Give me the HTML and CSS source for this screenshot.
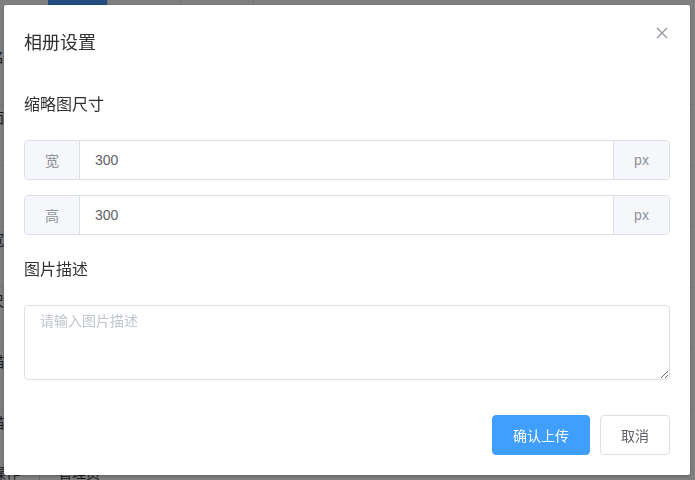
FILE: index.html
```html
<!DOCTYPE html>
<html lang="zh-CN">

<head>
    <meta charset="UTF-8">
    <meta name="viewport" content="width=device-width, initial-scale=1.0">
    <title>相册设置</title>
    <link rel="stylesheet" href="styles.css">
</head>

<body>
    <!-- page behind the dialog -->
    <div class="page">
        <div class="tabs">
            <span class="tab active"></span>
            <span class="tab"></span>
            <span class="tab"></span>
        </div>
        <div class="rows">
            <div class="row">名称</div>
            <div class="row">面</div>
            <div class="row"></div>
            <div class="row">宽</div>
            <div class="row">尺寸</div>
            <div class="row">描述</div>
            <div class="row">描述</div>
        </div>
        <div class="foot-row">
            <span class="cell">操作人</span>
            <span class="cell">管理员</span>
        </div>
    </div>

    <div class="mask">
        <div class="dialog">
            <div class="dialog-header">
                <span class="dialog-title">相册设置</span>
                <button class="dialog-close" aria-label="关闭">
                    <svg width="12" height="12" viewBox="0 0 12 12">
                        <path d="M1 1 L11 11 M11 1 L1 11" stroke="#909399" stroke-width="1.2" fill="none"/>
                    </svg>
                </button>
            </div>

            <div class="dialog-body">
                <div class="section-title">缩略图尺寸</div>

                <div class="input-group">
                    <div class="addon">宽</div>
                    <input type="text" class="inner" value="300">
                    <div class="addon append">px</div>
                </div>

                <div class="input-group second">
                    <div class="addon">高</div>
                    <input type="text" class="inner" value="300">
                    <div class="addon append">px</div>
                </div>

                <div class="section-title lower">图片描述</div>

                <textarea class="textarea" placeholder="请输入图片描述"></textarea>
            </div>

            <div class="dialog-footer">
                <button class="btn primary">确认上传</button>
                <button class="btn">取消</button>
            </div>
        </div>
    </div>
</body>

</html>
```

FILE: styles.css
```css
* {
    box-sizing: border-box;
}

body {
    margin: 0;
    width: 695px;
    height: 480px;
    overflow: hidden;
    font-family: "Liberation Sans", "Noto Sans CJK SC", sans-serif;
    background: #fff;
    color: #303133;
}

/* page behind the mask */
.page {
    height: 480px;
    position: relative;
}

.tabs {
    display: flex;
    height: 40px;
    padding-left: 48px;
}

.tab {
    width: 73px;
    border-right: 1px solid #e4e4e4;
}

.tab.active {
    width: 60px;
    background: #3e9cff;
    border-right: 1px solid #e4e4e4;
}

.rows {
    margin-top: 4px;
}

.row {
    height: 61px;
    padding-top: 2px;
    margin-left: -10px;
    font-size: 14px;
    color: #333;
    border-bottom: 1px solid #eee;
}

.foot-row {
    display: flex;
    font-size: 14px;
    color: #333;
    margin-top: -9px;
}

.foot-row .cell {
    width: 48px;
    margin-left: -8px;
    border-right: 1px solid #ddd;
    padding-right: 6px;
}

.foot-row .cell + .cell {
    margin-left: 0;
    padding-left: 18px;
    width: auto;
    border-right: none;
}

.mask {
    position: fixed;
    inset: 0;
    background: rgba(0, 0, 0, 0.5);
    padding: 5px 5px 5px 4px;
}

/* dialog */
.dialog {
    width: 686px;
    height: 470px;
    background: #fff;
    border-radius: 2px;
    box-shadow: 0 1px 3px rgba(0, 0, 0, 0.3);
    padding: 0 20px 20px;
    position: relative;
}

.dialog-header {
    padding-top: 26px;
    height: 50px;
}

.dialog-title {
    display: block;
    font-size: 18px;
    line-height: 24px;
    color: #303133;
}

.dialog-close {
    position: absolute;
    top: 22px;
    right: 22px;
    width: 12px;
    height: 12px;
    padding: 0;
    border: none;
    background: none;
    cursor: pointer;
}

.dialog-close svg {
    display: block;
}

.section-title {
    font-size: 16px;
    line-height: 24px;
    color: #303133;
    margin-top: 38px;
}

.section-title.lower {
    margin-top: 23px;
}

.input-group {
    display: flex;
    height: 40px;
    margin-top: 23px;
    border: 1px solid #dcdfe6;
    border-radius: 4px;
    overflow: hidden;
}

.input-group.second {
    margin-top: 15px;
}

.addon {
    width: 55px;
    flex: none;
    background: #f5f7fa;
    color: #909399;
    font-size: 14px;
    display: flex;
    align-items: center;
    justify-content: center;
    border-right: 1px solid #dcdfe6;
}

.addon.append {
    width: 56px;
    border-right: none;
    border-left: 1px solid #dcdfe6;
}

.inner {
    flex: 1;
    min-width: 0;
    border: none;
    outline: none;
    padding: 0 15px;
    font-family: inherit;
    font-size: 14px;
    color: #606266;
}

.textarea {
    display: block;
    width: 100%;
    height: 75px;
    margin-top: 23px;
    padding: 5px 15px;
    border: 1px solid #dcdfe6;
    border-radius: 4px;
    font-family: inherit;
    font-size: 14px;
    line-height: 1.5;
    color: #606266;
    resize: vertical;
    outline: none;
}

.textarea::placeholder {
    color: #c0c4cc;
}

.dialog-footer {
    margin-top: 35px;
    display: flex;
    justify-content: flex-end;
    gap: 10px;
}

.btn {
    height: 40px;
    padding: 0 20px;
    font-family: inherit;
    font-size: 14px;
    color: #606266;
    background: #fff;
    border: 1px solid #dcdfe6;
    border-radius: 4px;
    cursor: pointer;
}

.btn.primary {
    color: #fff;
    background: #409eff;
    border-color: #409eff;
}
```
